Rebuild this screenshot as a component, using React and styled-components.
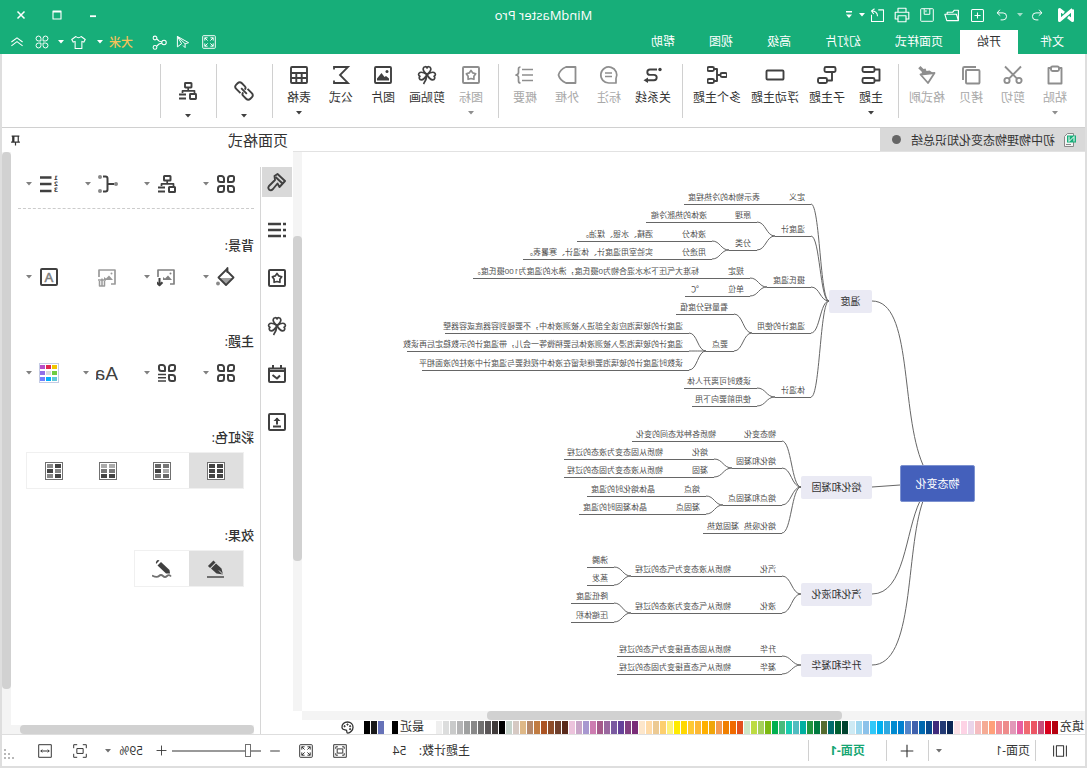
import React from 'react';
import styled, { createGlobalStyle } from 'styled-components';


const GlobalStyle = createGlobalStyle`
    * { box-sizing : border-box; }
    body {
        margin : 0;
        background : #dedede;
        font-family : "Open Sans", "Noto Sans CJK SC", sans-serif;
        font-size : 12px;
        color : #333333;
    }
    button, select, input {
        font : inherit;
        color : inherit;
        margin : 0;
        padding : 0;
        border : 0;
        background : none;
    }
    svg { display : block; flex : none; }
`;

const Window = styled.div`
    display : flex;
    flex-direction : column;
    min-height : 100vh;
    background : #ffffff;
    transform : scaleX(-1);
`;

const TitleBar = styled.header`
    display : grid;
    grid-template-columns : 1fr auto 1fr;
    align-items : center;
    height : 30px;
    background : #17ae79;
    color : #ffffff;
`;

const Title = styled.h1`
    margin : 0;
    font-size : 13px;
    font-weight : 400;
    line-height : 20px;
`;

const QuickTools = styled.div`
    display : flex;
    align-items : center;
    padding-left : 12px;
    gap : 7px;
`;

const Tools = styled.div`
    display : flex;
    align-items : center;
`;

const WindowTools = styled.div`
    display : flex;
    justify-content : flex-end;
    padding-right : 3px;
`;

const ToolButton = styled.button`
    display : flex;
    align-items : center;
    justify-content : center;
    flex : none;
    width : ${(props)=>props.$w || 25}px;
    height : 24px;
    opacity : ${(props)=>props.$dim ? 0.6 : 1};
`;

const MenuBar = styled.nav`
    display : flex;
    height : 24px;
    padding : 0 5px 0 6px;
    background : #17ae79;
    color : #ffffff;
`;

const MenuTab = styled.button`
    padding : 0 17px;
    height : 24px;
    line-height : 24px;
    white-space : nowrap;
    background : ${(props)=>props.$active ? '#ffffff' : 'transparent'};
    color : ${(props)=>props.$active ? '#333333' : '#ffffff'};
    margin-right : ${(props)=>props.$first ? 5 : 0}px;
`;

const MenuRight = styled.div`
    display : flex;
    align-items : center;
    margin-left : auto;
`;

const UserLink = styled.a`
    margin-left : 14px;
    color : #f8c159;
    font-weight : 500;
    text-decoration : none;
`;

const Body = styled.div`
    display : flex;
    flex-direction : column;
    flex : 1;
    border : solid #dedede;
    border-width : 0 2px 2px;
`;

const Ribbon = styled.div`
    display : flex;
    height : 74px;
    padding-left : 9px;
    border-bottom : 1px solid #d0d0d0;
`;

const RibbonButton = styled.button`
    display : flex;
    flex-direction : column;
    align-items : center;
    min-width : ${(props)=>props.$tall ? 44 : 42}px;
    padding : ${(props)=>props.$tall ? 27 : 11}px 5px 0;
    gap : ${(props)=>props.$tall ? 13 : 5}px;
    line-height : 16px;
    white-space : nowrap;
    color : ${(props)=>props.disabled ? '#a8a8a8' : '#333333'};
    svg { color : ${(props)=>props.disabled ? '#8e8e8e' : '#404040'}; }
`;

const Separator = styled.span`
    flex : none;
    width : 1px;
    height : 54px;
    margin : 10px 6px 0 5px;
    background : #d0d0d0;
`;

const Main = styled.main`
    display : flex;
    flex : 1;
`;

const Workspace = styled.section`
    display : flex;
    flex-direction : column;
    flex : 1;
    min-width : 0;
`;

const DocStrip = styled.div`
    display : flex;
    height : 24px;
    border-bottom : 1px solid #e2e2e2;
`;

const DocTab = styled.button`
    display : flex;
    align-items : center;
    gap : 8px;
    padding : 0 12px 0 8px;
    background : #d9d9d9;
`;

const Dirty = styled.span`
    width : 9px;
    height : 9px;
    margin-left : 2px;
    border-radius : 50%;
    background : #666666;
`;

const CanvasRow = styled.div`
    display : flex;
    flex : 1;
`;

const Canvas = styled.div`
    position : relative;
    flex : 1;
    overflow : hidden;
    svg {
        position : absolute;
        inset : 0;
    }
`;

const Topic = styled.span`
    position : absolute;
    left : ${(props)=>props.$x}px;
    top : ${(props)=>props.$y}px;
    font-size : 8px;
    line-height : 12px;
    white-space : nowrap;
    color : #505050;
`;

const MainTopic = styled.div`
    position : absolute;
    left : ${(props)=>props.$x}px;
    top : ${(props)=>props.$y}px;
    width : ${(props)=>props.$w}px;
    height : 23px;
    line-height : 22px;
    border-radius : 2px;
    background : #eaeaf4;
    text-align : center;
    font-size : 10px;
`;

const CenterTopic = styled(MainTopic)`
    height : 37px;
    line-height : 35px;
    border : 1px solid #7d92d0;
    background : #4460bb;
    color : #ffffff;
    font-size : 11px;
`;

const ScrollTrack = styled.div`
    display : flex;
    flex : none;
    flex-direction : ${(props)=>props.$vertical ? 'column' : 'row'};
    ${(props)=>props.$vertical ? 'width' : 'height'} : 9px;
    background : #f4f4f4;
    &::before {
        content : '';
        flex : ${(props)=>props.$before} 0 0;
    }
    &::after {
        content : '';
        flex : ${(props)=>props.$after} 0 0;
    }
`;

const PanelTrack = styled(ScrollTrack)`
    margin-top : auto;
`;

const ScrollThumb = styled.div`
    flex : ${(props)=>props.$size} 0 0;
    border-radius : 4px;
    background : #d1d1d1;
`;

const HorizontalRow = styled.div`
    padding-right : 9px;
`;

const ColorBar = styled.div`
    display : flex;
    align-items : center;
    height : 14px;
    padding-left : 1px;
    line-height : 14px;
    white-space : nowrap;
`;

const Swatches = styled.div`
    display : flex;
    gap : 1px;
    margin : 0 ${(props)=>props.$end}px 0 2px;
`;

const Swatch = styled.button`
    width : 6px;
    height : 13px;
    background : ${(props)=>props.$color};
`;

const Panel = styled.aside`
    display : flex;
    flex-direction : column;
    flex : none;
    width : 291px;
`;

const PanelHead = styled.div`
    display : flex;
    align-items : center;
    justify-content : space-between;
    height : 24px;
    padding : 0 7px 0 5px;
`;

const PanelTitle = styled.h2`
    margin : 0;
    font-size : 15px;
    font-weight : 400;
    line-height : 22px;
`;

const PanelBody = styled.div`
    display : flex;
    flex : 1;
`;

const SideTabs = styled.div`
    display : flex;
    flex : none;
    flex-direction : column;
    gap : 18px;
    width : 33px;
    margin-top : 15px;
    padding-left : 1px;
    border-right : 1px solid #d6d6d6;
`;

const SideTab = styled.button`
    display : flex;
    align-items : center;
    justify-content : center;
    width : 30px;
    height : 30px;
    color : #404040;
    background : ${(props)=>props.$active ? '#d9d9d9' : 'transparent'};
`;

const Settings = styled.div`
    display : flex;
    flex-direction : column;
    flex : 1;
    min-width : 0;
    padding : 22px 0 0 6px;
`;

const OptionRow = styled.div`
    display : flex;
    padding-left : 18px;
    height : 20px;
`;

const Option = styled.button`
    display : flex;
    flex : none;
    align-items : center;
    gap : 7px;
    width : 59px;
    color : ${(props)=>props.disabled ? '#9a9a9a' : '#404040'};
    &:last-child { width : auto; }
    svg + svg { color : #808080; }
`;

const Rule = styled.hr`
    width : 236px;
    margin : 14px 0 -18px;
    border : 0;
    border-top : 1px dashed #cccccc;
`;

const Section = styled.section`
    display : flex;
    flex-direction : column;
    gap : ${(props)=>props.$tight ? 5 : 12}px;
    margin-top : ${(props)=>props.$loose ? 36 : 44}px;
`;

const SectionTitle = styled.h3`
    margin : 0;
    font-size : 13px;
    font-weight : 500;
    line-height : 20px;
`;

const Segments = styled.div`
    display : flex;
    align-self : flex-start;
    margin-left : 10px;
    border : 1px solid #f0f0f0;
`;

const Segment = styled.button`
    display : flex;
    align-items : center;
    justify-content : center;
    width : 54px;
    height : 35px;
    color : #404040;
    background : ${(props)=>props.$active ? '#dfdfdf' : 'transparent'};
`;

const StatusBar = styled.footer`
    display : flex;
    align-items : center;
    height : 32px;
    border-top : 1px solid #dedede;
`;

const StatusDivider = styled.span`
    width : 1px;
    height : 21px;
    background : #d0d0d0;
`;

const PageSelect = styled.label`
    display : flex;
    align-items : center;
    width : ${(props)=>props.$w}px;
    padding : 0 7px 0 ${(props)=>props.$pad}px;
    color : #707070;
    select {
        flex : 1;
        min-width : 0;
        appearance : none;
        color : #333333;
        line-height : 20px;
    }
`;

const PageTab = styled.button`
    width : 77px;
    line-height : 20px;
    font-weight : 700;
    color : #17a673;
`;

const StatusRight = styled.div`
    display : flex;
    align-items : center;
    margin-left : auto;
`;

const Count = styled.span`
    width : 113px;
    line-height : 20px;
`;

const Zoom = styled.input`
    appearance : none;
    width : 89px;
    height : 14px;
    background : linear-gradient(#999999, #999999) center / 100% 2px no-repeat;
    &::-webkit-slider-thumb {
        appearance : none;
        width : 6px;
        height : 13px;
        border : 1px solid #707070;
        background : #ffffff;
    }
`;

const Icon = ({size = 20, sw = 2, children}) => (
    <svg width={size} height={size} viewBox="0 0 20 20" fill="none" stroke="currentColor" strokeWidth={sw} strokeLinejoin="round" aria-hidden="true">
        {children}
    </svg>
);

const Caret = () => (
    <svg width="6" height="4" viewBox="0 0 6 4" fill="currentColor" aria-hidden="true"><path d="M0 0h6L3 3.500z" /></svg>
);

const Logo = () => (
    <svg width="18" height="16" viewBox="0 0 18 16" fill="none" stroke="#ffffff" strokeWidth="3" strokeLinejoin="round" aria-hidden="true">
        <path d="M2.500 2.500v11l4.500-3.500M2.500 2.500l13 11v-11L11 6" />
    </svg>
);

const clover = (
    <>
        <path d="M10 9.500C7.500 7.500 5.500 5.500 6.300 3.300 7 1.300 9.300 1.200 10 3c.7-1.800 3-1.700 3.700.3C14.500 5.500 12.500 7.500 10 9.500z" />
        <path d="M10 9.500C7.500 8 5 6.500 3 7.500 1 8.500 1.200 10.500 3 11.200 1.500 12.500 2.300 14.700 4.300 14.800 6.700 14.800 8.500 12.500 10 9.500z" />
        <path d="M10 9.500c2.500-1.500 5-3 7-2 2 1 1.800 3 0 3.700 1.500 1.300.7 3.500-1.300 3.600C13.300 14.800 11.500 12.500 10 9.500zM10 9.500c.3 4 1.500 7 3.500 9.500" />
    </>
);

const starBox = (
    <>
        <rect x="2" y="2" width="16" height="16" rx="1" />
        <path d="M10 5.500l1.800 2.400 2.900.9-1.800 2.500v3L10 13.500l-2.900.8v-3L5.300 8.800l2.900-.9z" strokeWidth="1.700" />
    </>
);

const orgChart = (
    <>
        <rect x="6.500" y="2" width="6.500" height="4.500" rx=".5" />
        <path d="M9.800 6.500v3M3.500 12V9.800h12V12" strokeWidth="1.700" />
        <rect x="2" y="13" width="6" height="5" rx=".5" />
        <path d="M12 13.500h7M12 17.500h7" />
    </>
);

// three tiles, each with one square corner towards the middle
const grid = (
    <>
        <path d="M3.500 2h2A2.500 2.500 0 0 1 8 4.500V8H4.500A2.500 2.500 0 0 1 2 5.500v-2A1.500 1.500 0 0 1 3.500 2z" />
        <path d="M16.500 2h-2A2.500 2.500 0 0 0 12 4.500V8h3.500A2.500 2.500 0 0 0 18 5.500v-2A1.500 1.500 0 0 0 16.500 2z" />
        <path d="M3.500 18h2A2.500 2.500 0 0 0 8 15.500V12H4.500A2.500 2.500 0 0 0 2 14.500v2A1.500 1.500 0 0 0 3.500 18z" />
    </>
);

const picture = (
    <>
        <path d="M7 17H3V3h16v7" strokeWidth="1.700" />
        <path d="M5 13l4-4.500 3 3 2-1.500v3z" fill="currentColor" stroke="none" />
        <circle cx="6.500" cy="6.500" r="1" fill="currentColor" stroke="none" />
    </>
);

const icons = {
    paste: <><path d="M6 3H3.500v15.500h13V3H14" /><rect x="6" y="1.500" width="8" height="4.500" rx="1.500" /></>,
    cut: <><circle cx="4" cy="15.500" r="2.600" /><circle cx="16" cy="15.500" r="2.600" /><path d="M2 1.500L14 13.700M18 1.500L6 13.700" /></>,
    copy: <><rect x="1.500" y="5" width="13.500" height="13.500" rx="1" /><path d="M5 2h11.500q1.500 0 1.500 1.500V15" /></>,
    painter: <><path d="M16.500 1l2.300 2.200-3.800 3.800.8 2.500L3 8.500l4.500-3 3 .5 1-2.500 2 .5z" fill="currentColor" stroke="none" /><path d="M2.500 8l6.500 10 7.500-8.500z" strokeWidth="1.800" /></>,
    topic: <><rect x="6.500" y="2" width="12" height="5" rx="1.500" /><rect x="6.500" y="13" width="12" height="5" rx="1.500" /><path d="M6.500 4.500H1.500v11h5" /></>,
    subtopic: <><rect x="1.500" y="2" width="11" height="5" rx="1.500" /><rect x="10" y="13" width="9" height="5" rx="1.500" /><path d="M5 7v8.500h5" /></>,
    floating: <rect x="1.500" y="5.500" width="17" height="9" rx="1" />,
    multi: <><rect x="0" y="8" width="6.500" height="4" rx="1.500" /><rect x="13" y="2" width="6.500" height="4" rx="1.500" /><rect x="13" y="14" width="6.500" height="4" rx="1.500" /><path d="M6.500 10H10M13 4h-3v12h3" /></>,
    relation: <><path d="M6 4.500h7a2.700 2.700 0 0 1 0 5.400H9a2.700 2.700 0 0 0 0 5.400h6" /><circle cx="3" cy="4.500" r="1.700" fill="currentColor" stroke="none" /><path d="M15 12.500l4.500 2.800-4.500 2.800z" fill="currentColor" stroke="none" /></>,
    callout: <><path d="M3 18v-4.500A8 8 0 1 1 10 18z" strokeWidth="1.700" /><path d="M7 8h7M7 11.500h7" strokeWidth="1.700" /></>,
    boundary: <path d="M1.500 2h9.500q6 2.500 7.500 8-1.500 5.500-7.500 8H1.500z" strokeWidth="1.800" />,
    summary: <><path d="M2 4.500h11M2 10h11M2 15.500h11M14.500 2q2 0 2 2v3.500q0 2 2.500 2.500-2.500.5-2.500 2.500V16q0 2-2 2" strokeWidth="1.700" /></>,
    mark: starBox,
    clipart: <g strokeWidth="1.700">{clover}</g>,
    image: <><rect x="2" y="2" width="16" height="16" rx="1" /><path d="M4 15.500v-2l3-2.500 1.500 1 3-4 4.500 5.500v2z" fill="currentColor" stroke="none" /><circle cx="6" cy="6.500" r="1.500" fill="currentColor" stroke="none" /></>,
    formula: <path d="M17 4.500V2H3l8 8-8 8h14v-2.500" strokeLinejoin="miter" strokeWidth="1.800" />,
    table: <><rect x="2" y="2" width="16" height="16" rx="1" /><path d="M2 8h16M2 13h16M7.300 8v10M12.700 8v10" /></>,
    link: <g transform="rotate(-45 10 10)"><path d="M9 6H3q-3 0-3 3v2q0 3 3 3h4q2.500 0 2.500-2.500M11 14h6q3 0 3-3V9q0-3-3-3h-4q-2.500 0-2.500 2.500M6 10h8" /></g>,
    org: orgChart,
    brush: <><path d="M2 9l7.500-7 3 2-.5 4 6 6q1.500 2-.3 3.700-1.700 1.300-3.700-.7L9.500 11.500 7.500 15z" strokeWidth="1.900" /><path d="M4.500 11.500l7-6.500" /></>,
    list: <path d="M1 4h3M1 10h3M1 16h3M6 4h13M6 10h13M6 16h13" strokeWidth="2.600" />,
    calendar: <><path d="M2 4.500h16V17q0 1-1 1H3q-1 0-1-1zM2 3.500V7h16M6 1v4M14 1v4M7 11.500l3 3 4.500-3.500" /></>,
    upload: <><rect x="2" y="2" width="16" height="16" rx="1" /><path d="M6 14.500h8M10 12.500V6" /><path d="M6.500 9L10 5.500 13.500 9z" fill="currentColor" stroke="none" /></>,
    grid: <>{grid}<path d="M16.500 18h-2a2.500 2.500 0 0 1-2.500-2.500V12h3.500a2.500 2.500 0 0 1 2.500 2.500v2a1.500 1.500 0 0 1-1.500 1.500z" /></>,
    gridLines: <>{grid}<path d="M11 11.500h8M11 14.700h8M11 18h8" strokeWidth="1.600" /></>,
    bracket: <><path d="M4 10h6M15 2.500h-2.500q-2 0-2 2v11q0 2 2 2H15" /><g fill="#888888" stroke="none"><circle cx="2" cy="10" r="2" /><circle cx="18" cy="3" r="2" /><circle cx="18" cy="17" r="2" /></g></>,
    numbers: <><path d="M7.500 3.500H19M7.500 10H19M7.500 17H19" strokeWidth="2.600" /><g fill="currentColor" stroke="none" fontSize="6" fontWeight="700" fontFamily="DejaVu Sans"><text x="1" y="6">1</text><text x="1" y="12">2</text><text x="1" y="18">3</text></g></>,
    bucket: <><path d="M4 11h13l-6.500 6.500z" fill="#a0a0a0" stroke="none" /><path d="M10.500 2.500l-8 8 7.500 7.500 7.500-7.500-7.500-7.500L8.500 1v5" strokeWidth="1.800" /><circle cx="18" cy="16.500" r="1.900" fill="#888888" stroke="none" /></>,
    insertPicture: <><g color="#808080" stroke="currentColor">{picture}</g><path d="M17.500 11v7M14.500 15.300l3 3 3-3" /></>,
    removePicture: <>{picture}<path d="M12 13h8M13.500 14v5h5v-5M16 11.500v7" strokeWidth="1.500" /></>,
    boxedA: <><rect x="2" y="2" width="16" height="16" rx="1" /><text x="10" y="15" textAnchor="middle" fill="#808080" stroke="#808080" strokeWidth=".6" fontSize="13" fontFamily="Liberation Sans">A</text></>,
    pen: <><path d="M2 18h17" stroke="#707070" /><path d="M3 15.500l1.500-6 5.500-5 5 5-5.500 5z" fill="currentColor" stroke="none" /><path d="M3 15.500l4-4" stroke="#dfdfdf" strokeWidth="1" /><path d="M11.500 2.500l5.500 5.500" strokeWidth="3" /></>,
    crayon: <><path d="M1 17.500q2-2.500 4-.5t4 0 4 0 7-.5" stroke="#707070" strokeWidth="1.800" /><path d="M2 14.500l.5-3.500 8.500-8 3.500 3.500-8.500 8z" fill="currentColor" stroke="none" /><path d="M12.500 1.500q2-1 3 .5t.5 3z" fill="currentColor" stroke="none" /></>,
    undo: <path d="M7 2.500L3 7l4.500 4M3 7h8.500a5 5 0 0 1 0 10H8" />,
    redo: <path d="M13 2.500L17 7l-4.500 4M17 7H8.500a5 5 0 0 0 0 10H12" />,
    add: <><rect x="2" y="2" width="16" height="16" rx="1.500" /><path d="M10 6v8M6 10h8" /></>,
    open: <path d="M2 17V4h5l2 2.500h7V9M2 17l2.500-8H19l-2.500 8z" />,
    save: <><rect x="1" y="1" width="18" height="18" rx="1" /><path d="M6 1v8h8V1M11.500 3v3" /></>,
    print: <><path d="M5 6.500V1.500h10v5M5 15H1.500V6.500h17V15H15" /><rect x="5" y="11" width="10" height="7.500" /></>,
    exportFile: <path d="M9 2.500H2V18h16V9M10 11q0-7 8-7M14 1l4 3-3 4" />,
    minimize: <path d="M5 12h10" strokeWidth="3" />,
    maximize: <path d="M2 2h16v16H2zM2 4h16" strokeWidth="2.200" />,
    close: <path d="M3 3l14 14M17 3L3 17" strokeWidth="3" />,
    fullscreen: <><rect x="1" y="1" width="18" height="18" rx="1" /><path d="M4 8V4h4M12 4h4v4M16 12v4h-4M8 16H4v-4M4 4l4 4M16 4l-4 4M16 16l-4-4M4 16l4-4" /></>,
    send: <path d="M18 2v15l-6-4.500L18 2 2 11l5 1.500L18 2M7 12.500V18l3-3" />,
    share: <><circle cx="4" cy="10" r="3" /><circle cx="16" cy="4" r="2.500" /><circle cx="16" cy="16.500" r="2.500" /><path d="M7 9q4 0 6.500-4M7 11q4 0 6.500 4" /></>,
    shirt: <path d="M6.500 2q3.500 3.500 7 0l5.500 4-2 3.500-2.500-1V18h-9V8.500L3 9.500 1 6z" />,
    apps: <><path d="M5 1.500A3.500 3.500 0 1 0 5 8.500h3.500V5A3.500 3.500 0 0 0 5 1.500zM15 1.500a3.500 3.500 0 1 1 0 7h-3.500V5A3.500 3.500 0 0 1 15 1.500zM5 18.500a3.500 3.500 0 1 1 0-7h3.500V15A3.500 3.500 0 0 1 5 18.500zM15 18.500a3.500 3.500 0 1 0 0-7h-3.500V15a3.500 3.500 0 0 0 3.500 3.500z" /></>,
    chevron: <path d="M2 10l8-6 8 6M2 15.500l8-6 8 6" strokeWidth="1.500" />,
    pages: <path d="M2 3v14M18 3v14M5.500 3.500h9v13h-9z" />,
    plus: <path d="M10 1v18M1 10h18" />,
    minus: <path d="M2 10h16" />,
    fitPage: <><rect x="1" y="1" width="18" height="18" /><path d="M4 7V4h3M13 4h3v3M16 13v3h-3M7 16H4v-3M6 7h8v6H6z" /></>,
    fitView: <><path d="M1 6V1h5M14 1h5v5M19 14v5h-5M6 19H1v-5" /><rect x="5.500" y="6.500" width="9" height="7" /></>,
    fitWidth: <><rect x="1" y="1" width="18" height="18" /><path d="M4 10h12M6 8l-2 2 2 2M14 8l2 2-2 2" /></>,
    pin: <path d="M3 2h14M5 2v11M2 13h16M13 2v11M15 2v11M10 13v6" strokeWidth="2.200" />,
    palette: <><path d="M10 1.500c-5 0-8.500 3.500-8.500 8 0 5 4.500 9 8 9 2.500 0 1-2.500 2-4s6.500 0 7-4.500c.4-5-3.500-8.500-8.500-8.500z" strokeWidth="2" /><g fill="currentColor"><circle cx="6" cy="8" r="1" /><circle cx="10" cy="5.500" r="1" /><circle cx="14.500" cy="8" r="1" /><circle cx="6" cy="12.500" r="1" /></g></>,
};

const CellIcon = ({cells, cols, size = 18, frame = '#707070'}) => {
    const wide = cols === 2;
    const edge = wide ? 18 : 20;
    return (
        <svg width={size} height={size} viewBox={`0 0 ${edge} ${edge}`} aria-hidden="true">
            <rect x=".5" y=".5" width={edge - 1} height={edge - 1} fill="#ffffff" stroke={frame} />
            {cells.map((c, i) => (
                <rect key={i} x={2 + (i % cols) * (wide ? 8 : 6)} y={2 + Math.floor(i / cols) * (wide ? 5 : 6)} width={wide ? 6 : 5} height={4} fill={c} />
            ))}
        </svg>
    );
};

const ribbon = [
    [
        {t: '粘贴', i: 'paste', off: true, menu: true},
        {t: '剪切', i: 'cut', off: true},
        {t: '拷贝', i: 'copy', off: true},
        {t: '格式刷', i: 'painter', off: true},
    ],
    [
        {t: '主题', i: 'topic', menu: true},
        {t: '子主题', i: 'subtopic'},
        {t: '浮动主题', i: 'floating'},
        {t: '多个主题', i: 'multi'},
    ],
    [
        {t: '关系线', i: 'relation'},
        {t: '标注', i: 'callout', off: true},
        {t: '外框', i: 'boundary', off: true},
        {t: '概要', i: 'summary', off: true},
    ],
    [
        {t: '图标', i: 'mark', off: true, menu: true},
        {t: '剪贴画', i: 'clipart'},
        {t: '图片', i: 'image'},
        {t: '公式', i: 'formula'},
        {t: '表格', i: 'table', menu: true},
    ],
    [{i: 'link', name: '链接', menu: true}],
    [{i: 'org', name: '布局', menu: true}],
];

// s and e are the ends of the underline, y its height; more is text further along it
const branches = [
    {t: '温度', x: 213, y: 138, w: 43, kids: [
        {t: '定义', s: 274, e: 401, y: 52, more: '表示物体的冷热程度', mx: 325},
        {t: '温度计', s: 274, e: 310, y: 84, kids: [
            {t: '原理', s: 328, e: 439, y: 70, more: '液体的热胀冷缩', mx: 378},
            {t: '分类', s: 328, e: 356, y: 98, kids: [
                {t: '液体分', s: 373, e: 508, y: 89, more: '酒精、水银、煤油。', mx: 432},
                {t: '用途分', s: 373, e: 562, y: 107, more: '实验室用温度计、体温计、寒暑表。', mx: 432},
            ]},
        ]},
        {t: '摄氏温度', s: 274, e: 318, y: 135, kids: [
            {t: '规定', s: 335, e: 612, y: 126, more: '标准大气压下冰水混合物为0摄氏度，沸水的温度为100摄氏度。', mx: 386},
            {t: '单位', s: 335, e: 400, y: 144, more: '℃', mx: 386},
        ]},
        {t: '温度计的使用', s: 274, e: 333, y: 181, kids: [
            {t: '看量程分度值', s: 351, e: 409, y: 162},
            {t: '要点', s: 351, e: 379, y: 199, kids: [
                {t: '温度计的玻璃泡应该全部进入被测液体中，不要碰到容器底或容器壁', s: 396, e: 640, y: 181},
                {t: '温度计的玻璃泡浸入被测液体后要稍微等一会儿，带温度计的示数稳定后再读数', s: 396, e: 678, y: 199},
                {t: '读数时温度计的玻璃泡要继续留在液体中视线要与温度计中液柱的液面相平', s: 396, e: 663, y: 218},
            ]},
        ]},
        {t: '体温计', s: 274, e: 310, y: 245, kids: [
            {t: '读数时可离开人体', s: 328, e: 401, y: 236},
            {t: '使用前要向下甩', s: 328, e: 393, y: 254},
        ]},
    ]},
    {t: '熔化和凝固', x: 213, y: 324, w: 71, kids: [
        {t: '物态变化', s: 303, e: 453, y: 289, more: '物质各种状态间的变化', mx: 369},
        {t: '熔化和凝固', s: 303, e: 353, y: 316, kids: [
            {t: '熔化', s: 371, e: 521, y: 307, more: '物质从固态变为液态的过程', mx: 422},
            {t: '凝固', s: 371, e: 521, y: 325, more: '物质从液态变为固态的过程', mx: 422},
        ]},
        {t: '熔点和凝固点', s: 303, e: 362, y: 353, kids: [
            {t: '熔点', s: 379, e: 498, y: 344, more: '晶体熔化时的温度', mx: 430},
            {t: '凝固点', s: 379, e: 506, y: 362, more: '晶体凝固时的温度', mx: 438},
        ]},
        {t: '熔化吸热', s: 303, e: 382, y: 381, more: '凝固放热', mx: 346},
    ]},
    {t: '汽化和液化', x: 213, y: 431, w: 71, kids: [
        {t: '汽化', s: 303, e: 454, y: 424, more: '物质从液态变为气态的过程', mx: 354, kids: [
            {t: '沸腾', s: 471, e: 498, y: 415},
            {t: '蒸发', s: 471, e: 498, y: 433},
        ]},
        {t: '液化', s: 303, e: 454, y: 461, more: '物质从气态变为液态的过程', mx: 354, kids: [
            {t: '降低温度', s: 471, e: 514, y: 451},
            {t: '压缩体积', s: 471, e: 514, y: 470},
        ]},
    ]},
    {t: '升华和凝华', x: 213, y: 502, w: 71, kids: [
        {t: '升华', s: 303, e: 468, y: 504, more: '物质从固态直接变为气态的过程', mx: 354},
        {t: '凝华', s: 303, e: 468, y: 522, more: '物质从气态直接变为固态的过程', mx: 354},
    ]},
];

const rootLines = 'M162 313C185 260 172 149 213 149M185 333L213 335M165 349C180 380 180 442 213 442M162 349C180 400 170 513 213 513';

const walk = (kids, x, y, out) => {
    kids.forEach((k) => {
        const mid = (x + k.s) / 2;
        out.lines.push(`M${x} ${y}C${mid} ${y} ${mid} ${k.y} ${k.s} ${k.y}`);
        out.rules.push(`M${k.s} ${k.y + 0.5}H${k.e}`);
        out.texts.push({t: k.t, x: k.s + 6, y: k.y - 13});
        if (k.more) out.texts.push({t: k.more, x: k.mx, y: k.y - 13});
        if (k.kids) walk(k.kids, k.e, k.y, out);
    });
    return out;
};

const MindMap = () => {
    const out = {lines: [], rules: [], texts: []};
    branches.forEach((b) => walk(b.kids, b.x + b.w, b.y + 11, out));
    return (
        <Canvas>
            <svg width="100%" height="100%" fill="none" stroke="#666666" aria-hidden="true">
                <path d={rootLines} />
                <path d={out.lines.join('')} />
                <path d={out.rules.join('')} />
            </svg>
            {out.texts.map((n, i) => <Topic key={i} $x={n.x} $y={n.y}>{n.t}</Topic>)}
            {branches.map((b) => <MainTopic key={b.t} $x={b.x} $y={b.y} $w={b.w}>{b.t}</MainTopic>)}
            <CenterTopic $x={110} $y={313} $w={75}>物态变化</CenterTopic>
        </Canvas>
    );
};

const palette = `b50010 d9001b c84f79 ec5564 f06a70 e75fa0 e297b8 ee8b8b f18f9b ffa07a f5ab95 f5bcc0 ead5ea fdd3e5 fbe0e6
0b2554 233a75 402a7c 0a4a8d 0068b0 3f61ad 5283c8 0080d0 008ad0 2fa8e0 00b0f0 30c8f8 8cc2ea a0d8f0 cdeaf4
00432f 005d30 006b6b 556b2f 007a40 209540 00b0a0 50bcc0 1accb0 47bb7d 00b050 7cb912 a5d05a bddb42 cde6c7
e2501e f06a00 f07f00 f59a50 f0a50a ffb000 fdb833 ffc832 ffd800 ffeb00 fdf17b fdcf6e ecca93 ffdba8 fde6ca
7a2d78 824080 65439a 7a5aa0 9a689f a55a8a cd7cb0 a898d0 c9a5c8 ecc3dc
5a2a1a 6f3f2c 8e4d2a ab5322 c17c42 b5886a deb887 d6c9c3 c6d3cb
000000 403b3a 5a5657 727171 898989 9fa0a0 b5b5b6 c9caca dcdddd efefef`.split(/\s+/);

const recent = ['000000', 'ffffff', '6672b8', '1a1a1a', '000000'];

const Tool = ({i, name, w, size = 14, sw = 1.4, dim}) => (
    <ToolButton aria-label={name} $w={w} $dim={dim}>
        {i ? <Icon size={size} sw={sw}>{icons[i]}</Icon> : <Caret />}
    </ToolButton>
);

const Choice = ({i, name, menu = true, off}) => (
    <Option aria-label={name} disabled={off}>
        <Icon>{icons[i]}</Icon>
        {menu && <Caret />}
    </Option>
);

const App = () => {
  return (
    <Window lang="zh-CN">
        <GlobalStyle />
        <TitleBar>
            <QuickTools>
                <Logo />
                <Tools>
                    <Tool i="undo" name="撤销" />
                    <Tool name="撤销列表" w={10} dim />
                    <Tool i="redo" name="恢复" />
                    <Tool i="add" name="新建" size={15} />
                    <Tool i="open" name="打开" size={16} />
                    <Tool i="save" name="保存" />
                    <Tool i="print" name="打印" size={16} />
                    <Tool i="exportFile" name="导出" size={15} />
                    <Tool name="导出列表" w={6} />
                    <ToolButton aria-label="更多" $w={20}>
                        <svg width="6" height="8" viewBox="0 0 6 8" fill="currentColor" aria-hidden="true"><path d="M0 0h6v1.500H0zM0 3.500h6L3 7z" /></svg>
                    </ToolButton>
                </Tools>
            </QuickTools>
            <Title>MindMaster Pro</Title>
            <WindowTools>
                <Tool i="minimize" name="最小化" w={36} size={12} />
                <Tool i="maximize" name="最大化" w={36} size={10} />
                <Tool i="close" name="关闭" w={36} size={10} />
            </WindowTools>
        </TitleBar>
        <MenuBar>
            <MenuTab $first>文件</MenuTab>
            <MenuTab $active>开始</MenuTab>
            <MenuTab>页面样式</MenuTab>
            <MenuTab>幻灯片</MenuTab>
            <MenuTab>高级</MenuTab>
            <MenuTab>视图</MenuTab>
            <MenuTab>帮助</MenuTab>
            <MenuRight>
                <Tool i="fullscreen" name="全屏" w={28} />
                <Tool i="send" name="发送" w={24} />
                <Tool i="share" name="分享" w={24} size={15} />
                <UserLink href="#user">大米</UserLink>
                <Tool name="账户" w={18} />
                <Tool i="shirt" name="皮肤" w={24} size={15} />
                <Tool name="皮肤列表" w={12} />
                <Tool i="apps" name="应用" w={26} />
                <Tool i="chevron" name="收起" w={24} />
            </MenuRight>
        </MenuBar>
        <Body>
            <Ribbon>
                {ribbon.map((group, g) => (
                    <React.Fragment key={g}>
                        {group.map((b) => (
                            <RibbonButton key={b.i} disabled={b.off} $tall={!b.t} aria-label={b.name}>
                                <Icon sw={1.9}>{icons[b.i]}</Icon>
                                {b.t}
                                {b.menu && <Caret />}
                            </RibbonButton>
                        ))}
                        <Separator />
                    </React.Fragment>
                ))}
            </Ribbon>
            <Main>
                <Workspace>
                    <DocStrip>
                        <DocTab>
                            <svg width="14" height="16" viewBox="0 0 14 16" aria-hidden="true">
                                <path d="M3.500 1.500h6l3 3v10h-9z" fill="#f4f4f4" stroke="#888888" />
                                <path d="M6 12.500h5" stroke="#888888" />
                                <rect x="1" y="3.500" width="9" height="7" fill="#17ae79" />
                                <path d="M3 9.500v-5l5 5v-5" fill="none" stroke="#ffffff" />
                            </svg>
                            初中物理物态变化知识总结
                            <Dirty />
                        </DocTab>
                    </DocStrip>
                    <CanvasRow>
                        <MindMap />
                        <ScrollTrack $vertical $before={84} $after={150}>
                            <ScrollThumb $size={325} />
                        </ScrollTrack>
                    </CanvasRow>
                    <HorizontalRow>
                        <ScrollTrack $before={243} $after={185}>
                            <ScrollThumb $size={355} />
                        </ScrollTrack>
                    </HorizontalRow>
                    <ColorBar>
                        填充
                        <Swatches $end={12}>
                            {palette.map((c, i) => <Swatch key={i} aria-label={`#${c}`} $color={`#${c}`} />)}
                        </Swatches>
                        最近
                        <Swatches $end={9}>
                            {recent.map((c, i) => <Swatch key={i} aria-label={`#${c}`} $color={`#${c}`} />)}
                        </Swatches>
                        <Tool i="palette" name="更多颜色" w={14} size={13} />
                    </ColorBar>
                </Workspace>
                <Panel>
                    <PanelHead>
                        <PanelTitle>页面格式</PanelTitle>
                        <Tool i="pin" name="固定" w={14} size={11} />
                    </PanelHead>
                    <PanelBody>
                        <SideTabs>
                            <SideTab aria-label="页面格式" $active><Icon>{icons.brush}</Icon></SideTab>
                            <SideTab aria-label="大纲"><Icon>{icons.list}</Icon></SideTab>
                            <SideTab aria-label="图标"><Icon>{icons.mark}</Icon></SideTab>
                            <SideTab aria-label="剪贴画"><Icon>{icons.clipart}</Icon></SideTab>
                            <SideTab aria-label="任务"><Icon>{icons.calendar}</Icon></SideTab>
                            <SideTab aria-label="上传"><Icon>{icons.upload}</Icon></SideTab>
                        </SideTabs>
                        <Settings>
                            <OptionRow>
                                <Choice i="grid" name="结构" />
                                <Choice i="org" name="布局" />
                                <Choice i="bracket" name="连线样式" />
                                <Choice i="numbers" name="编号" />
                            </OptionRow>
                            <Rule />
                            <Section>
                                <SectionTitle>背景:</SectionTitle>
                                <OptionRow>
                                    <Choice i="bucket" name="背景颜色" />
                                    <Choice i="insertPicture" name="背景图片" />
                                    <Choice i="removePicture" name="移除背景" menu={false} off />
                                    <Choice i="boxedA" name="水印" />
                                </OptionRow>
                            </Section>
                            <Section>
                                <SectionTitle>主题:</SectionTitle>
                                <OptionRow>
                                    <Choice i="grid" name="主题" />
                                    <Choice i="gridLines" name="主题列表" />
                                    <Option aria-label="主题字体">
                                        <svg width="22" height="20" viewBox="0 0 22 20" fill="currentColor" aria-hidden="true">
                                            <text x="0" y="17" fontSize="19" fontFamily="Liberation Sans">Aa</text>
                                        </svg>
                                        <Caret />
                                    </Option>
                                    <Option aria-label="主题颜色">
                                        <CellIcon cols={3} size={20} frame="#c4cbe4" cells={['#f0c400', '#e0284f', '#b84fc8', '#6fcc3f', '#dcdcdc', '#8f70e8', '#60c8d8', '#00b0f8', '#7080ff']} />
                                        <Caret />
                                    </Option>
                                </OptionRow>
                            </Section>
                            <Section $tight>
                                <SectionTitle>彩虹色:</SectionTitle>
                                <Segments>
                                    <Segment aria-label="彩虹色 1" $active><CellIcon cols={2} cells={['#444', '#444', '#444', '#444', '#444', '#444']} /></Segment>
                                    <Segment aria-label="彩虹色 2"><CellIcon cols={2} cells={['#777', '#666', '#aaa', '#444', '#666', '#777']} /></Segment>
                                    <Segment aria-label="彩虹色 3"><CellIcon cols={2} cells={['#aaa', '#aaa', '#777', '#777', '#444', '#444']} /></Segment>
                                    <Segment aria-label="彩虹色 4"><CellIcon cols={2} cells={['#444', '#888', '#888', '#444', '#444', '#888']} /></Segment>
                                </Segments>
                            </Section>
                            <Section $tight $loose>
                                <SectionTitle>效果:</SectionTitle>
                                <Segments>
                                    <Segment aria-label="普通" $active><Icon>{icons.pen}</Icon></Segment>
                                    <Segment aria-label="手绘"><Icon>{icons.crayon}</Icon></Segment>
                                </Segments>
                            </Section>
                            <PanelTrack $before={0} $after={9}>
                                <ScrollThumb $size={234} />
                            </PanelTrack>
                        </Settings>
                        <ScrollTrack $vertical $before={0} $after={45}>
                            <ScrollThumb $size={537} />
                        </ScrollTrack>
                    </PanelBody>
                </Panel>
            </Main>
            <StatusBar>
                <Tool i="pages" name="页面列表" w={49} size={16} sw={1.3} />
                <StatusDivider />
                <PageSelect $w={106} $pad={5}>
                    <select aria-label="页面"><option>页面-1</option></select>
                    <Caret />
                </PageSelect>
                <StatusDivider />
                <Tool i="plus" name="添加页面" w={41} sw={1.6} />
                <StatusDivider />
                <PageTab>页面-1</PageTab>
                <StatusDivider />
                <StatusRight>
                    <Count>主题计数: &nbsp;&nbsp; 54</Count>
                    <Tool i="fitPage" name="适应页面" w={34} />
                    <Tool i="fullscreen" name="全屏显示" w={34} />
                    <Tool i="minus" name="缩小" w={28} size={12} sw={1.6} />
                    <Zoom type="range" min="10" max="400" defaultValue="59" aria-label="缩放" />
                    <Tool i="plus" name="放大" w={20} size={11} sw={1.6} />
                    <PageSelect $w={54} $pad={9}>
                        <select aria-label="缩放比例"><option>59%</option></select>
                        <Caret />
                    </PageSelect>
                    <Tool i="fitView" name="适应窗口" w={35} />
                    <Tool i="fitWidth" name="适应宽度" w={35} />
                    <svg width="26" height="24" viewBox="0 0 26 24" fill="#b8b8b8" aria-hidden="true">
                        <path d="M22 10h2v2h-2zM18 14h2v2h-2zM22 14h2v2h-2zM14 18h2v2h-2zM18 18h2v2h-2zM22 18h2v2h-2z" />
                    </svg>
                </StatusRight>
            </StatusBar>
        </Body>
    </Window>
  )
}

export default App
